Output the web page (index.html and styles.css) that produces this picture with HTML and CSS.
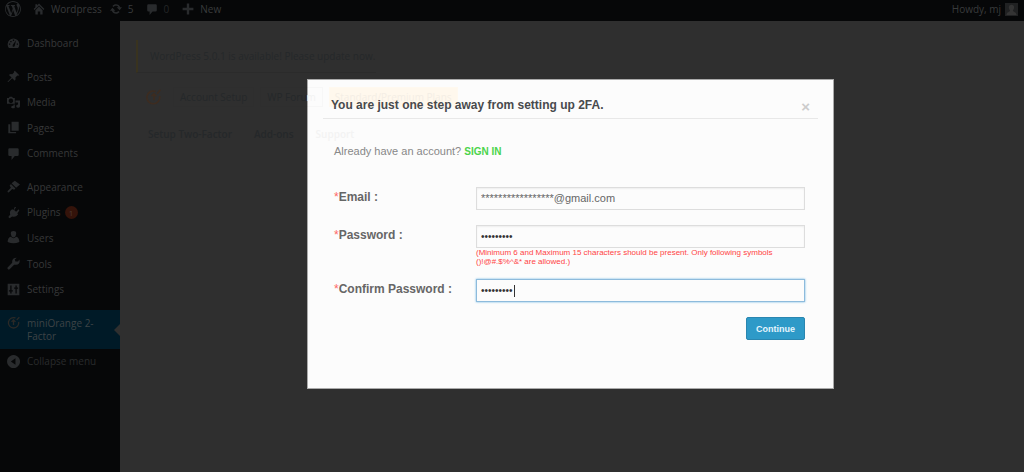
FILE: index.html
```html
<!DOCTYPE html>
<html lang="en">
<head>
<meta charset="utf-8">
<meta name="viewport" content="width=device-width, initial-scale=1">
<title>miniOrange 2-Factor</title>
<link rel="stylesheet" href="styles.css">
</head>
<body>
<header class="adminbar">
  <a class="bar-item" href="#" aria-label="About WordPress"><svg class="logo" viewBox="0 0 20 20"><path d="M20 10c0-5.5-4.5-10-10-10S0 4.500 0 10s4.500 10 10 10 10-4.500 10-10zM7.800 15.400L4.400 6.200c.5 0 1.200-.1 1.200-.1.500-.1.400-1.100-.1-1.100 0 0-1.500.1-2.400.1h-.5C4.100 2.700 6.900 1.100 10 1.100c2.300 0 4.500.9 6.100 2.400-.700-.1-1.700.400-1.700 1.600 0 .700.500 1.300.900 2.100.400.600.600 1.400.600 2.500 0 1.500-1.400 5-1.400 5l-3-8.400c.5 0 .8-.2.8-.2.5 0 .5-1.200-.1-1.200 0 0-1.400.1-2.400.1-.8 0-2.200-.1-2.200-.1-.5 0-.6 1.200-.1 1.200l.9.100 1.300 3.500zM17.400 10c.2-.6.700-1.900.4-4.300.7 1.300 1.100 2.800 1.100 4.300 0 3.300-1.700 6.200-4.400 7.700zM6.100 18.100C3.100 16.700.900 13.500.900 10c0-1.300.200-2.500.700-3.600zM10.100 11.500l2.600 7c-.9.300-1.800.4-2.700.4-.800 0-1.600-.100-2.300-.300z"/></svg></a>
  <a class="bar-item site" href="#"><svg viewBox="0 0 20 20"><path d="M10 1l9 9-1.500 1.500L10 4.200l-7.500 7.300L1 10l3-3V2h3v2zM10 6l6 6v7h-4v-5H8v5H4v-7z"/></svg>Wordpress</a>
  <a class="bar-item updates" href="#"><svg viewBox="0 0 20 20"><path d="M10 2c3.300 0 6 1.700 7 5h3l-4 5-5-5h3c-1-1.500-2.200-2.300-4-2.300-1.700 0-3 .8-4 2L4 5c1.500-2 3.500-3 6-3zM4 8l5 5H6c1 1.500 2.200 2.300 4 2.300 1.700 0 3-.8 4-2l2 1.700c-1.500 2-3.500 3-6 3-3.300 0-6-1.700-7-5H0z"/></svg>5</a>
  <a class="bar-item quiet" href="#"><svg viewBox="0 0 20 20"><path d="M4 2h12q2 0 2 2v8q0 2-2 2h-5l-5 6v-6H4q-2 0-2-2V4q0-2 2-2z"/></svg>0</a>
  <a class="bar-item new" href="#"><svg viewBox="0 0 20 20"><path d="M8 1h4v7h7v4h-7v7H8v-7H1V8h7z"/></svg>New</a>
  <a class="bar-item account" href="#">Howdy, mj<svg class="avatar" viewBox="0 0 14 14"><path class="avatar-bg" d="M0 0h14v14H0z"/><path d="M7 2c4 0 3 5 1.500 6C9 10 12 9 12.500 13h-11C2 9 5 10 5.500 8 4 7 3 2 7 2z"/></svg></a>
</header>
<div class="shell">
  <nav class="menu" aria-label="Main menu">
    <ul class="group one">
      <li><a href="#"><svg viewBox="0 0 20 20"><path fill-rule="evenodd" d="M3 17a9 9 0 1 1 14 0zM9 4v2h2V4zM5 6v2h2V6zM3 10v2h2v-2zM15 10v2h2v-2zM14 5l-5 7q-1 3 1 3t2-2z"/></svg>Dashboard</a></li>
    </ul>
    <ul class="group four">
      <li><a href="#"><svg viewBox="0 0 20 20"><path d="M12 1l7 7-2 1-1-.5-3 3q1 3-1 5l-4-4-6 6-1 0 0-1 6-6-4-4q2-2 5-1l3-3-.5-1z"/></svg>Posts</a></li>
      <li><a href="#"><svg viewBox="0 0 20 20"><path fill-rule="evenodd" d="M1 3h2l1-2h4l1 2h3v9H0V3zM6 4a3.500 3.500 0 1 0 .1 0zM13 7h7v9a3 2.500 0 1 1-3-3v-3h-4zM10 13h2v5a3 2 0 1 1-2-3z"/></svg>Media</a></li>
      <li><a href="#"><svg viewBox="0 0 20 20"><path d="M7 1h11v14H7zM2 5h3v12h9v2H2z"/></svg>Pages</a></li>
      <li><a href="#"><svg viewBox="0 0 20 20"><path d="M4 2h12q2 0 2 2v8q0 2-2 2h-4l-5 6v-6H4q-2 0-2-2V4q0-2 2-2z"/></svg>Comments</a></li>
    </ul>
    <ul class="group five">
      <li><a href="#"><svg viewBox="0 0 20 20"><path d="M12 1l8 6-6 5-7-7zM6 6l7 7-2 2-3-1-5 5q-3 1-2-2l5-5-2-3z"/></svg>Appearance</a></li>
      <li><a href="#"><svg viewBox="0 0 20 20"><path d="M12 1l2 1-3 4 3 3 4-4 1 2-3 4 1 2q-4 5-9 3l-4 3-2-2 3-4q-2-5 3-8l2 1z"/></svg>Plugins<span class="count">1</span></a></li>
      <li><a href="#"><svg viewBox="0 0 20 20"><path d="M10 0q5 0 4 5-1 5-4 5T6 5q-1-5 4-5zM6 9q4 4 8 0 5 1 5 8-9 4-18 0 0-7 5-8z"/></svg>Users</a></li>
      <li><a href="#"><svg viewBox="0 0 20 20"><path d="M17 7l2-3q2 7-5 8h-3l-7 7q-2 1-3-1-1-1 0-2l7-7q-1-8 7-8l-3 3 1 3z"/></svg>Tools</a></li>
      <li><a href="#"><svg viewBox="0 0 20 20"><path fill-rule="evenodd" d="M1 1h18v18H1zM5 4v7H3v2h2v3h2v-3h2v-2H7V4zM13 4v3h-2v2h2v7h2V9h2V7h-2V4z"/></svg>Settings</a></li>
    </ul>
    <a class="current" href="#" aria-current="page"><svg class="ring" viewBox="0 0 20 20"><path d="M13 3a8 8 0 1 0 5 6M10 14V7M7 9l3-3 3 3M15 6l4-4"/></svg><span>miniOrange 2-Factor</span></a>
    <button class="collapse" type="button"><svg viewBox="0 0 20 20"><path fill-rule="evenodd" d="M10 0a10 10 0 1 0 .1 0zM13 5v10l-7-5z"/></svg>Collapse menu</button>
  </nav>
  <main class="page">
    <p class="notice">WordPress 5.0.1 is available! Please update now.</p>
    <div class="actions">
      <svg class="mark" viewBox="0 0 20 20"><path d="M12 3a8 8 0 1 0 5 6M10 14V7M7 9l3-3 3 3M14 6l4-5"/></svg>
      <a class="chip" href="#">Account Setup</a>
      <a class="chip" href="#">WP Foru<span class="pale">m</span></a>
      <a class="chip plans" href="#">Standard/Premium Plans</a>
    </div>
    <div class="tabs">
      <a href="#">Setup Two-Factor</a>
      <a href="#">Add-ons</a>
      <a class="pale" href="#">Support</a>
    </div>
  </main>
</div>
<div class="overlay">
  <section class="dialog" role="dialog" aria-labelledby="dialog-title">
    <header class="dialog-head">
      <h1 id="dialog-title">You are just one step away from setting up 2FA.</h1>
      <button class="close" type="button" aria-label="Close">×</button>
    </header>
    <form class="form">
      <p class="signin">Already have an account? <a href="#">SIGN IN</a></p>
      <div class="field">
        <label for="email"><span class="req">*</span>Email :</label>
        <input id="email" type="text" value="*****************@gmail.com">
      </div>
      <div class="field with-hint">
        <label for="password"><span class="req">*</span>Password :</label>
        <div class="control">
          <input id="password" type="password" value="ninechars" aria-describedby="hint">
          <p id="hint" class="hint">(Minimum 6 and Maximum 15 characters should be present. Only following symbols ()!@#.$%^&amp;* are allowed.)</p>
        </div>
      </div>
      <div class="field">
        <label for="confirm"><span class="req">*</span>Confirm Password :</label>
        <input id="confirm" class="active" type="password" value="ninechars" autofocus>
      </div>
      <button class="submit" type="submit">Continue</button>
    </form>
  </section>
</div>
</body>
</html>
```
FILE: styles.css
```css
* { box-sizing: border-box; }
body {
  margin: 0;
  min-height: 100vh;
  display: flex;
  flex-direction: column;
  position: relative;
  background: #2f2f2f;
  font: 10px/14px "Open Sans", "Noto Sans", sans-serif;
}
a { color: inherit; text-decoration: none; }
p, h1, ul { margin: 0; padding: 0; }
ul { list-style: none; }
button { font: inherit; border: 0; cursor: pointer; }
svg { flex: none; fill: #292b2d; }

.adminbar {
  height: 21px;
  display: flex;
  align-items: center;
  padding: 0 6px 3px 5px;
  background: #060708;
  color: #393b3c;
}
.bar-item { display: flex; align-items: center; gap: 6px; }
.bar-item svg { width: 12px; height: 12px; }
.bar-item .logo { width: 16px; height: 16px; }
.site { margin-left: 12px; }
.updates { margin-left: 8px; }
.quiet { margin-left: 12px; color: #242627; }
.new { margin-left: 13px; }
.account { margin-left: auto; gap: 4px; }
.account .avatar { width: 13px; height: 13px; fill: #343434; }
.account .avatar-bg { fill: #202122; }

.shell { flex: 1; display: flex; }
.menu {
  width: 120px;
  flex: none;
  display: flex;
  flex-direction: column;
  padding-top: 9px;
  background: #060708;
  color: #373839;
}
.menu svg { width: 13px; height: 13px; }
.group { display: flex; flex-direction: column; margin-bottom: 8px; }
.group li { flex: 1; display: flex; }
.group a, .current, .collapse {
  display: flex;
  align-items: center;
  gap: 7px;
  padding: 0 12px 0 7px;
}
.one { min-height: 26px; }
.four { min-height: 102px; }
.five { min-height: 128px; }
.count {
  width: 13px;
  height: 13px;
  margin-left: -3px;
  border-radius: 50%;
  background: #34130a;
  color: #4b3b36;
  font-size: 8px;
  line-height: 13px;
  text-align: center;
}
.current {
  position: relative;
  min-height: 39px;
  background: #001a27;
  color: #3d4346;
  line-height: 13px;
}
.current::after {
  content: "";
  position: absolute;
  right: 0;
  top: 14px;
  border: 6px solid transparent;
  border-left: 0;
  border-right-color: #2f2f2f;
}
.current svg { align-self: flex-start; margin-top: 6px; }
.ring { fill: none; stroke: #2b2a27; stroke-width: 2; }
.collapse { height: 24px; background: none; color: #292b2c; text-align: left; }

/* The page stays faintly visible over the panel's background. */
.page {
  flex: 1;
  min-width: 0;
  position: relative;
  z-index: 1;
  padding: 19px 16px;
  pointer-events: none;
  color: #25282a;
}
.notice {
  width: 240px;
  padding: 9px 12px;
  border-left: 2px solid #39331f;
  border-bottom: 1px solid #2b2b2b;
  white-space: nowrap;
}
.actions { display: flex; align-items: center; margin-top: 14px; }
.mark { width: 16px; height: 16px; margin: 0 11px 0 10px; fill: none; stroke: #3d2c20; stroke-width: 2; }
.chip { padding: 2px 6px; border: 1px solid rgba(0, 0, 0, .02); white-space: nowrap; }
.chip + .chip { margin-left: 6px; }
.chip.plans { padding: 2px 5px; border-color: #fff9ef; background: #fff8ed; color: #f4eee5; }
.pale { color: #f3f3f3; }
.tabs { display: flex; gap: 22px; margin-top: 20px; padding-left: 12px; font-weight: 600; }

/* No z-index here, so the panel's background falls below .page. */
.overlay {
  position: absolute;
  top: 79px;
  left: 117px;
  right: 0;
  display: flex;
  justify-content: center;
  padding: 0 16px;
  font-family: "Liberation Sans", Arial, sans-serif;
  pointer-events: none;
}
.dialog {
  width: 100%;
  max-width: 527px;
  padding: 16px 15px 48px;
  border: 1px solid #aaa;
  background: #fcfcfc;
  pointer-events: auto;
}
.dialog-head, .form { position: relative; z-index: 2; }
.dialog-head {
  display: flex;
  justify-content: space-between;
  padding: 0 8px 4px;
  border-bottom: 1px solid #e8e8e8;
}
.dialog-head h1 { color: #484a4d; font-size: 12px; line-height: 18px; }
.close { padding: 4px 0 0; background: none; color: #ccc; font-size: 15px; font-weight: bold; line-height: 14px; }
.form { display: flex; flex-direction: column; padding: 24px 13px 0 11px; color: #666; }
.signin { margin-bottom: 27px; color: #888; font-size: 11px; line-height: 16px; }
.signin a { color: #4bd44b; font-size: 10px; font-weight: bold; }
.field { display: grid; grid-template-columns: 142px 1fr; margin-bottom: 15px; }
.with-hint { margin-bottom: 13px; }
.field label { font-size: 12px; font-weight: bold; line-height: 21px; }
.req { color: #f66; font-weight: normal; }
.field input {
  width: 100%;
  height: 23px;
  padding: 0 4px 1px;
  border: 1px solid #ddd;
  outline: 0;
  background: #fcfcfc;
  box-shadow: inset 0 1px 2px #eee;
  color: #666;
  font: 11px "Liberation Sans", Arial, sans-serif;
}
.field input[type="password"] { color: #333; font-size: 10px; }
.field .active {
  border-color: #8dbbdc;
  box-shadow: 0 0 2px #6ab4e4;
  background: linear-gradient(#333, #333) 37px center / 1px 12px no-repeat #fcfcfc;
  caret-color: transparent;
}
.hint { color: #f44; font-size: 8px; line-height: 9px; }
.submit {
  align-self: flex-end;
  height: 23px;
  padding: 0 9px;
  border: 1px solid #2a86b0;
  border-radius: 2px;
  background: #2e9ac8;
  color: #e4f5fd;
  font-size: 9px;
  font-weight: bold;
}
```
